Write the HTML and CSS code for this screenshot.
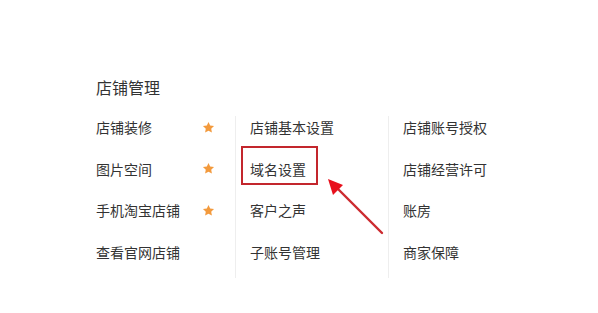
FILE: index.html
```html
<!DOCTYPE html>
<html lang="zh-CN">
<head>
<meta charset="utf-8">
<title>店铺管理</title>
<link rel="stylesheet" href="styles.css">
</head>
<body>
<div class="page">
  <h2 class="title">店铺管理</h2>
  <div class="grid">
    <ul class="col col-first">
      <li class="item"><span>店铺装修</span><svg class="star" viewBox="0 0 24 24"><path d="M12 1.8l3.1 6.6 7.1.9-5.2 4.9 1.3 7.1L12 17.8l-6.3 3.5 1.3-7.1L1.8 9.3l7.1-.9z" fill="#f39a3d"/></svg></li>
      <li class="item"><span>图片空间</span><svg class="star" viewBox="0 0 24 24"><path d="M12 1.8l3.1 6.6 7.1.9-5.2 4.9 1.3 7.1L12 17.8l-6.3 3.5 1.3-7.1L1.8 9.3l7.1-.9z" fill="#f39a3d"/></svg></li>
      <li class="item"><span>手机淘宝店铺</span><svg class="star" viewBox="0 0 24 24"><path d="M12 1.8l3.1 6.6 7.1.9-5.2 4.9 1.3 7.1L12 17.8l-6.3 3.5 1.3-7.1L1.8 9.3l7.1-.9z" fill="#f39a3d"/></svg></li>
      <li class="item"><span>查看官网店铺</span></li>
    </ul>
    <ul class="col">
      <li class="item"><span>店铺基本设置</span></li>
      <li class="item item-marked"><span>域名设置</span></li>
      <li class="item"><span>客户之声</span></li>
      <li class="item"><span>子账号管理</span></li>
    </ul>
    <ul class="col">
      <li class="item"><span>店铺账号授权</span></li>
      <li class="item"><span>店铺经营许可</span></li>
      <li class="item"><span>账房</span></li>
      <li class="item"><span>商家保障</span></li>
    </ul>
  </div>
  <svg class="arrow" width="70" height="70" viewBox="0 0 70 70">
    <line x1="56" y1="54" x2="9" y2="7" stroke="#cc2a2f" stroke-width="2.4" stroke-linecap="round"/>
    <path d="M2 0 L17 6 L7 16 Z" fill="#e8101c"/>
  </svg>
</div>
</body>
</html>
```
FILE: styles.css
```css
html, body {
  margin: 0;
  padding: 0;
  background: #ffffff;
}
.page {
  position: relative;
  width: 598px;
  height: 313px;
  padding: 77px 0 0 96px;
  box-sizing: border-box;
  font-family: "Noto Sans CJK SC", "Microsoft YaHei", sans-serif;
  color: #333333;
}
.title {
  margin: 0;
  font-size: 16px;
  font-weight: normal;
  line-height: 20px;
  color: #333333;
}
.grid {
  display: grid;
  grid-template-columns: 139px 153px 150px;
  margin-top: 19px;
}
.col {
  list-style: none;
  margin: 0;
  padding: 1px 0 16px 14px;
  border-left: 1px solid #eeeeee;
  display: flex;
  flex-direction: column;
  gap: 21.5px;
}
.col-first {
  border-left: none;
  padding-left: 0;
  padding-right: 20px;
}
.item {
  display: flex;
  align-items: center;
  justify-content: space-between;
  height: 20px;
  font-size: 14px;
  line-height: 20px;
  white-space: nowrap;
}
.star {
  width: 13px;
  height: 13px;
  flex: none;
}
.item-marked {
  position: relative;
}
.item-marked::after {
  content: "";
  position: absolute;
  left: -9px;
  top: -13px;
  width: 73px;
  height: 35px;
  border: 2px solid #c3262d;
}
.arrow {
  position: absolute;
  left: 326px;
  top: 179px;
}
```
